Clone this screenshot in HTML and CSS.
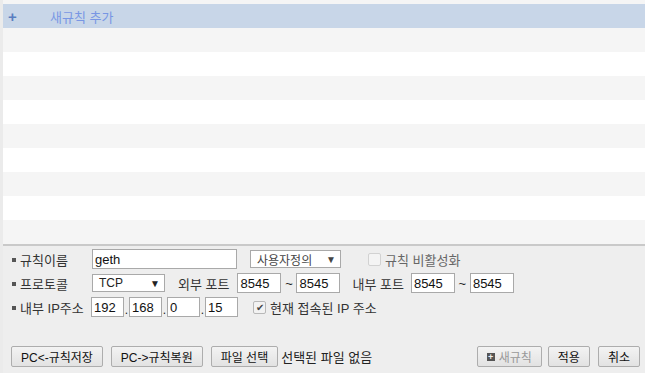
FILE: index.html
```html
<!DOCTYPE html>
<html lang="ko">
<head>
    <meta charset="UTF-8">
    <title>포트 포워딩</title>
    <link rel="stylesheet" href="styles.css">
</head>
<body>
    <div class="frame">
        <div class="rules">
            <div class="row add"><span class="plus">+</span><span class="add-text">새규칙 추가</span></div>
            <div class="row odd"></div>
            <div class="row"></div>
            <div class="row odd"></div>
            <div class="row"></div>
            <div class="row odd"></div>
            <div class="row"></div>
            <div class="row odd"></div>
            <div class="row"></div>
            <div class="row odd"></div>
        </div>

        <div class="form">
            <div class="line">
                <span class="label"><i class="dot"></i>규칙이름</span>
                <input class="txt name" type="text" value="geth">
                <span class="sel w-custom">사용자정의<b>▼</b></span>
                <label class="chk off"><span class="box"></span>규칙 비활성화</label>
            </div>
            <div class="line">
                <span class="label"><i class="dot"></i>프로토콜</span>
                <span class="sel w-proto">TCP<b>▼</b></span>
                <span class="word ext">외부 포트</span>
                <input class="txt port" type="text" value="8545">
                <span class="tilde">~</span>
                <input class="txt port" type="text" value="8545">
                <span class="word int">내부 포트</span>
                <input class="txt port" type="text" value="8545">
                <span class="tilde">~</span>
                <input class="txt port" type="text" value="8545">
            </div>
            <div class="line">
                <span class="label"><i class="dot"></i>내부 IP주소</span>
                <input class="txt ip first" type="text" value="192"><span class="ipdot">.</span><input class="txt ip" type="text" value="168"><span class="ipdot">.</span><input class="txt ip" type="text" value="0"><span class="ipdot">.</span><input class="txt ip" type="text" value="15">
                <label class="chk on"><span class="box">&#10004;</span>현재 접속된 IP 주소</label>
            </div>

            <div class="actions">
                <button class="btn">PC&lt;-규칙저장</button>
                <button class="btn">PC-&gt;규칙복원</button>
                <button class="btn">파일 선택</button>
                <span class="nofile">선택된 파일 없음</span>
                <span class="spacer"></span>
                <button class="btn dim"><i class="sq">+</i>새규칙</button>
                <button class="btn">적용</button>
                <button class="btn">취소</button>
            </div>
        </div>
    </div>
</body>
</html>
```

FILE: styles.css
```css
body {
    margin: 0;
    font-family: "Liberation Sans", "Noto Sans CJK KR", sans-serif;
    font-size: 13px;
    color: #222;
    background: #ffffff;
}
.frame {
    width: 645px;
    height: 373px;
    border-left: 3px solid #ebebeb;
    box-sizing: border-box;
    display: flex;
    flex-direction: column;
}
.rules {
    padding-top: 4px;
    background: #f5f5f5;
}
.row {
    height: 24px;
    background: #ffffff;
}
.row.odd {
    background: #f5f5f5;
}
.row.add {
    background: #c8d6e8;
    display: flex;
    align-items: center;
    font-size: 13px;
}
.plus {
    color: #5a7ec0;
    font-weight: bold;
    font-size: 15px;
    width: 42px;
    padding-left: 5px;
    line-height: 1;
}
.add-text {
    color: #7896e4;
}
.form {
    flex: 1;
    background: #eeeeee;
    border-top: 2px solid #c9c9c9;
    padding: 1px 0 0 6px;
}
.line {
    height: 24px;
    display: flex;
    align-items: center;
}
.label {
    width: 80px;
    flex-shrink: 0;
    display: flex;
    align-items: center;
    color: #333;
    white-space: nowrap;
}
.dot {
    width: 4px;
    height: 4px;
    background: #555;
    margin: 2px 4px 0 3px;
}
.txt {
    box-sizing: border-box;
    height: 20px;
    border: 1px solid #a9a9a9;
    background: #fff;
    font-family: "Liberation Sans", sans-serif;
    font-size: 13px;
    padding: 0 2px;
    color: #111;
    margin: 0;
}
.name {
    width: 145px;
    margin-left: 3px;
}
.sel {
    box-sizing: border-box;
    height: 18px;
    border: 1px solid #a9a9a9;
    background: #fff;
    display: flex;
    align-items: center;
    justify-content: space-between;
    padding: 0 4px 0 6px;
    font-size: 12px;
}
.sel b {
    font-size: 10px;
    font-weight: normal;
}
.w-custom {
    width: 91px;
    margin-left: 13px;
    color: #444;
}
.w-proto {
    width: 73px;
    margin-left: 3px;
}
.chk {
    display: flex;
    align-items: center;
    color: #333;
}
.chk .box {
    box-sizing: border-box;
    width: 13px;
    height: 13px;
    border: 1px solid #b8b8b8;
    border-radius: 2px;
    background: #f2f2f2;
    margin-right: 4px;
    font-size: 10px;
    line-height: 11px;
    text-align: center;
    color: #444;
}
.chk.off {
    margin-left: 27px;
    color: #666;
}
.chk.off .box {
    border-color: #d2d2d2;
    background: #f4f4f4;
}
.chk.on {
    margin-left: 15px;
}
.word {
    color: #333;
}
.ext {
    margin-left: 13px;
    margin-right: 8px;
}
.int {
    margin-left: 12px;
    margin-right: 7px;
}
.port {
    width: 44px;
}
.tilde {
    width: 15px;
    text-align: center;
}
.ip {
    width: 33px;
}
.ip.first {
    margin-left: 2px;
}
.ipdot {
    width: 5px;
    text-align: center;
    font-size: 12px;
    padding-top: 6px;
}
.actions {
    display: flex;
    align-items: center;
    margin-top: 27px;
    padding-right: 5px;
    margin-left: 2px;
}
.btn {
    height: 21px;
    box-sizing: border-box;
    border: 1px solid #adadad;
    border-radius: 2px;
    background: linear-gradient(#f3f3f3, #e2e2e2);
    font-family: "Liberation Sans", "Noto Sans CJK KR", sans-serif;
    font-size: 12px;
    color: #111;
    padding: 0 9px;
    margin-right: 8px;
    display: flex;
    align-items: center;
}
.btn:last-child {
    margin-right: 0;
}
.nofile {
    margin-left: -5px;
    color: #222;
}
.spacer {
    flex: 1;
}
.btn.dim {
    color: #999;
    margin-right: 6px;
}
.sq {
    width: 8px;
    height: 8px;
    background: #555;
    color: #eee;
    font-style: normal;
    font-size: 9px;
    line-height: 8px;
    text-align: center;
    margin-right: 4px;
    font-weight: bold;
}
```
